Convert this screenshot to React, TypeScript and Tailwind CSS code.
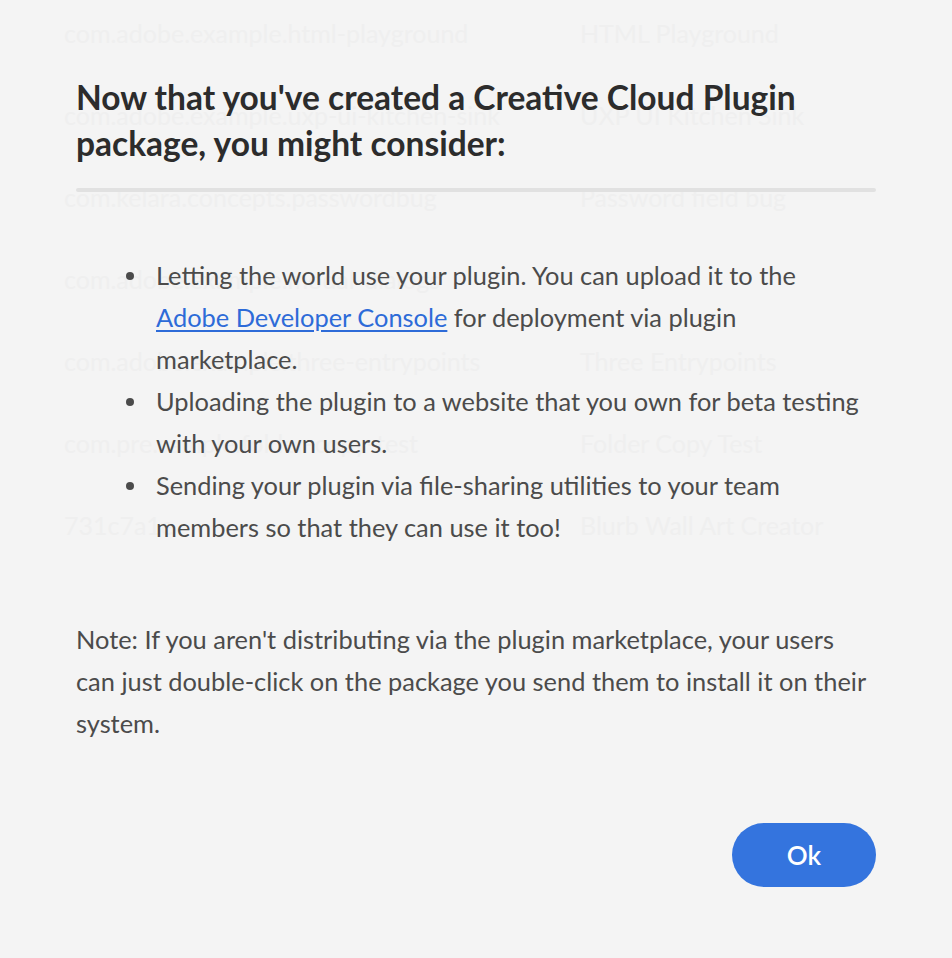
const pluginRows: [string, string][] = [
  ['com.adobe.example.html-playground', 'HTML Playground'],
  ['com.adobe.example.uxp-ui-kitchen-sink', 'UXP UI Kitchen Sink'],
  ['com.kelara.concepts.passwordbug', 'Password field bug'],
  ['com.adobe.example.modal-dialogs', ''],
  ['com.adobe.example.three-entrypoints', 'Three Entrypoints'],
  ['com.pre.sample.folder-copy-test', 'Folder Copy Test'],
  ['731c7a1e', 'Blurb Wall Art Creator'],
];

function Bullet({ children }: { children: React.ReactNode }) {
  return (
    <li className="flex">
      <span className="ml-[50px] mt-[18px] h-[8px] w-[8px] shrink-0 rounded-full bg-[#4b4b4b]" />
      <span className="ml-[22px] whitespace-nowrap">{children}</span>
    </li>
  );
}

export default function App() {
  return (
    <div
      className="relative h-[958px] w-[952px] overflow-hidden bg-[#f4f4f4]"
      style={{ fontFamily: 'Lato, "Open Sans", sans-serif' }}
    >
      {/* plugin list behind the dialog, barely showing through */}
      <div className="flex flex-col gap-[60px] pt-[22px] pl-[64px] text-[25px] leading-[22px] text-[#efefef]">
        {pluginRows.map(([id, name], i) => (
          <div key={i} className="flex h-[22px]">
            <span className="w-[516px] whitespace-nowrap">{id}</span>
            <span className="whitespace-nowrap">{name}</span>
          </div>
        ))}
      </div>

      {/* dialog */}
      <div className="absolute inset-0 flex flex-col px-[76px] pt-[74px]">
        <h2 className="whitespace-nowrap text-[33.5px] font-bold leading-[46px] text-[#2c2c2c]">
          Now that you've created a Creative Cloud Plugin
          <br />
          package, you might consider:
        </h2>
        <div className="mt-[22px] h-1 rounded-full bg-[#e1e1e1]" />

        <ul className="mt-[62px] text-[25.4px] leading-[42px] text-[#4b4b4b]">
          <Bullet>
            Letting the world use your plugin. You can upload it to the
            <br />
            <a href="#" className="text-[#2d6bd8] underline underline-offset-[3px]">
              Adobe Developer Console
            </a>{' '}
            for deployment via plugin
            <br />
            marketplace.
          </Bullet>
          <Bullet>
            Uploading the plugin to a website that you own for beta testing
            <br />
            with your own users.
          </Bullet>
          <Bullet>
            Sending your plugin via file-sharing utilities to your team
            <br />
            members so that they can use it too!
          </Bullet>
        </ul>

        <p className="mt-[70px] whitespace-nowrap text-[25.4px] leading-[42px] text-[#4b4b4b]">
          Note: If you aren't distributing via the plugin marketplace, your users
          <br />
          can just double-click on the package you send them to install it on their
          <br />
          system.
        </p>

        <div className="mt-[79px] flex justify-end">
          <button className="h-[64px] w-[144px] rounded-full bg-[#3474de] text-[26px] font-semibold text-white">
            Ok
          </button>
        </div>
      </div>
    </div>
  );
}
